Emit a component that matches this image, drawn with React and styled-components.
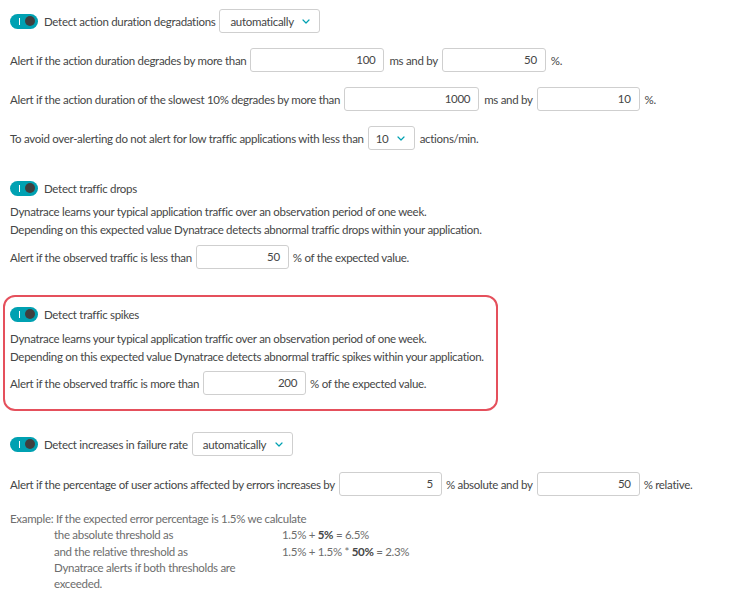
import React from "react";
import styled, { createGlobalStyle } from "styled-components";

const Global = createGlobalStyle`
  html, body { margin: 0; padding: 0; background: #ffffff; }
  body {
    font-family: "Lato", "Open Sans", sans-serif;
    font-size: 11.5px;
    letter-spacing: -0.3px;
    font-variant-ligatures: none;
    color: #454646;
  }
`;

const Page = styled.div`
  padding: 9px 0 0 10px;
  width: 741px;
  box-sizing: border-box;
`;

const Section = styled.section`
  margin-top: ${(p) => p.$mt || 0}px;
`;

const HighlightBox = styled.section`
  margin: 26px 0 0 -7px;
  width: 495px;
  box-sizing: border-box;
  border: 2px solid #e5505c;
  border-radius: 12px;
  padding: 5px 0 14px 5px;
`;

const Row = styled.div`
  display: flex;
  align-items: center;
  height: 24px;
  gap: 4px;
  margin-top: ${(p) => p.$mt || 0}px;
  white-space: nowrap;
`;

const Label = styled.span`
  margin-left: ${(p) => p.$ml || 0}px;
`;

const ToggleTrack = styled.span`
  position: relative;
  display: inline-block;
  width: 28px;
  height: 15px;
  border-radius: 8px;
  background: #00a1b2;
  flex: none;
  margin-right: 2px;
`;

const ToggleBar = styled.span`
  position: absolute;
  left: 9px;
  top: 4px;
  width: 1px;
  height: 7px;
  background: #ffffff;
`;

const ToggleThumb = styled.span`
  position: absolute;
  right: 3px;
  top: 2.5px;
  width: 10px;
  height: 10px;
  border-radius: 50%;
  background: #3f3f3f;
`;

const Toggle = () => (
  <ToggleTrack>
    <ToggleBar />
    <ToggleThumb />
  </ToggleTrack>
);

const SelectBox = styled.div`
  display: flex;
  align-items: center;
  justify-content: space-between;
  box-sizing: border-box;
  width: ${(p) => p.$w}px;
  height: 24px;
  padding: 0 9px 0 ${(p) => p.$pl || 10}px;
  border: 1px solid #cfcfcf;
  border-radius: 3px;
  background: #fff;
  color: #454646;
  flex: none;
`;

const Chevron = () => (
  <svg width="8" height="5" viewBox="0 0 8 5" style={{ display: "block" }}>
    <path d="M1 1 L4 4 L7 1" fill="none" stroke="#00a1b2" strokeWidth="1.2" strokeLinecap="round" strokeLinejoin="round" />
  </svg>
);

const Select = ({ w, pl, children }) => (
  <SelectBox $w={w} $pl={pl}>
    <span>{children}</span>
    <Chevron />
  </SelectBox>
);

const Input = styled.div`
  box-sizing: border-box;
  width: ${(p) => p.$w}px;
  height: 24px;
  line-height: 22px;
  padding-right: 8px;
  text-align: right;
  border: 1px solid #cfcfcf;
  border-radius: 3px;
  background: #fff;
  flex: none;
`;

const Para = styled.p`
  margin: ${(p) => p.$mt || 3}px 0 0 0;
  line-height: 18px;
  white-space: nowrap;
`;

const Example = styled.div`
  margin-top: 15px;
  color: #6d6d6d;
  line-height: 16.3px;
  white-space: nowrap;
`;

const ExampleGrid = styled.div`
  display: grid;
  grid-template-columns: 228px auto;
  padding-left: 44px;
`;

const Bold = styled.b`
  font-weight: 700;
  color: #454646;
`;

export default function App() {
  return (
    <>
      <Global />
      <Page>
        <Section>
          <Row>
            <Toggle />
            <Label>Detect action duration degradations</Label>
            <Select w={101}>automatically</Select>
          </Row>
          <Row $mt={15}>
            <Label>Alert if the action duration degrades by more than</Label>
            <Input $w={134}>100</Input>
            <Label $ml={1}>ms and by</Label>
            <Input $w={104}>50</Input>
            <Label $ml={1}>%.</Label>
          </Row>
          <Row $mt={15}>
            <Label>Alert if the action duration of the slowest 10% degrades by more than</Label>
            <Input $w={135}>1000</Input>
            <Label $ml={1}>ms and by</Label>
            <Input $w={103}>10</Input>
            <Label $ml={1}>%.</Label>
          </Row>
          <Row $mt={15}>
            <Label>To avoid over-alerting do not alert for low traffic applications with less than</Label>
            <Select w={47} pl={7}>10</Select>
            <Label $ml={1}>actions/min.</Label>
          </Row>
        </Section>

        <Section $mt={26}>
          <Row>
            <Toggle />
            <Label>Detect traffic drops</Label>
          </Row>
          <Para>
            Dynatrace learns your typical application traffic over an observation period of one week.
            <br />
            Depending on this expected value Dynatrace detects abnormal traffic drops within your application.
          </Para>
          <Row $mt={6}>
            <Label>Alert if the observed traffic is less than</Label>
            <Input $w={93}>50</Input>
            <Label>% of the expected value.</Label>
          </Row>
        </Section>

        <HighlightBox>
          <Row>
            <Toggle />
            <Label>Detect traffic spikes</Label>
          </Row>
          <Para $mt={4}>
            Dynatrace learns your typical application traffic over an observation period of one week.
            <br />
            Depending on this expected value Dynatrace detects abnormal traffic spikes within your application.
          </Para>
          <Row $mt={5}>
            <Label>Alert if the observed traffic is more than</Label>
            <Input $w={103}>200</Input>
            <Label>% of the expected value.</Label>
          </Row>
        </HighlightBox>

        <Section $mt={21}>
          <Row>
            <Toggle />
            <Label>Detect increases in failure rate</Label>
            <Select w={101}>automatically</Select>
          </Row>
          <Row $mt={16}>
            <Label>Alert if the percentage of user actions affected by errors increases by</Label>
            <Input $w={103}>5</Input>
            <Label>% absolute and by</Label>
            <Input $w={103}>50</Input>
            <Label>% relative.</Label>
          </Row>
          <Example>
            <div>Example: If the expected error percentage is 1.5% we calculate</div>
            <ExampleGrid>
              <span>the absolute threshold as</span>
              <span>
                1.5% + <Bold>5%</Bold> = 6.5%
              </span>
              <span>and the relative threshold as</span>
              <span>
                1.5% + 1.5% * <Bold>50%</Bold> = 2.3%
              </span>
              <span>Dynatrace alerts if both thresholds are</span>
              <span />
              <span>exceeded.</span>
              <span />
            </ExampleGrid>
          </Example>
        </Section>
      </Page>
    </>
  );
}
